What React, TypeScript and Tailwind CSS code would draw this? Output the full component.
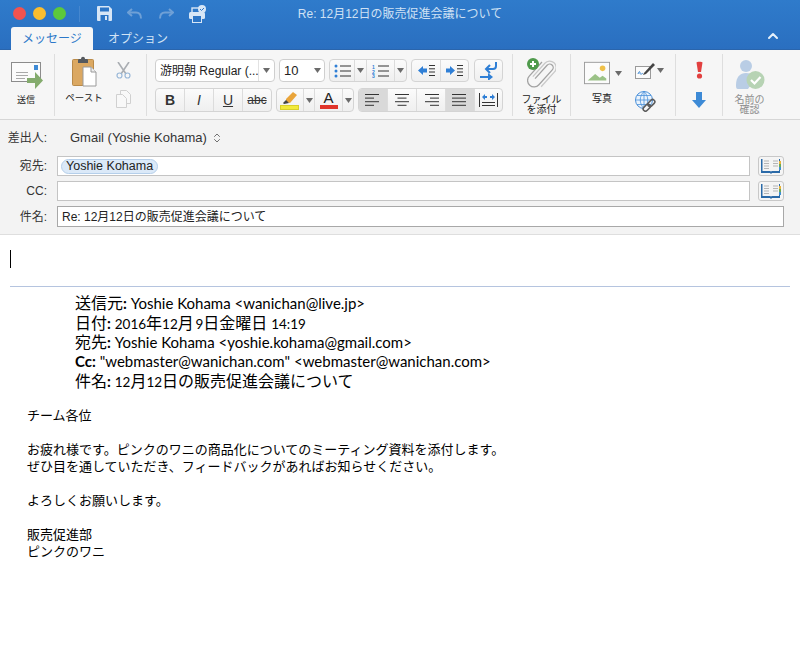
import type { ReactNode } from 'react'
import { ChevronUp, ChevronsUpDown } from 'lucide-react'

const jp = { fontFamily: '"Liberation Sans", "Noto Sans CJK JP", sans-serif' }

const Caret = ({ color = '#6b6b6b' }: { color?: string }) => (
	<svg width="7" height="5" viewBox="0 0 7 5" className="shrink-0">
		<path d="M0 0h7L3.5 5z" fill={color} />
	</svg>
)

const Seg = ({ children, className = '' }: { children: ReactNode; className?: string }) => (
	<div
		className={`flex shrink-0 rounded-[4px] border border-[#d4d4d4] bg-gradient-to-b from-[#fbfbfb] to-[#efefef] overflow-hidden ${className}`}
	>
		{children}
	</div>
)

const Cell = ({ children, w, active, last }: { children: ReactNode; w: string; active?: boolean; last?: boolean }) => (
	<div
		className={`flex items-center justify-center ${w} ${last ? '' : 'border-r border-[#dcdcdc]'} ${active ? 'bg-[#d9d9d9]' : ''}`}
	>
		{children}
	</div>
)

const AlignIcon = ({ widths, anchor }: { widths: number[]; anchor: 'l' | 'c' | 'r' }) => (
	<svg width="16" height="12" viewBox="0 0 16 12">
		{widths.map((w, i) => {
			const x = anchor === 'l' ? 0 : anchor === 'r' ? 16 - w : (16 - w) / 2
			return <rect key={i} x={x} y={i * 3.6} width={w} height="1" fill="#333" />
		})}
	</svg>
)

const BookIcon = () => (
	<svg width="20" height="18" viewBox="0 0 20 18">
		<path d="M0 2h9l1 1 1-1h8v14h-8l-1 1-1-1H0z" fill="#2b6aa8" />
		<path d="M1.5 1h7.5l1 1v12.5l-1-.5H1.5zM18 1h-7l-1 1v12.5l1-.5h7z" fill="#f4f4f4" />
		<path d="M3 4h5M3 6.5h5M3 9h5M3 11.5h5M12 4h5M12 6.5h5M12 9h5" stroke="#b5b5b5" strokeWidth="1" />
		<rect x="18" y="4" width="2" height="3" fill="#e8b23a" />
		<rect x="18" y="7" width="2" height="3" fill="#6aaa55" />
		<rect x="18" y="10" width="2" height="3" fill="#3f8fd0" />
	</svg>
)

const SendIcon = () => (
	<svg width="32" height="27" viewBox="0 0 32 27">
		<rect x="0.5" y="0.5" width="29" height="19" fill="#fbfbfb" stroke="#8c8c8c" />
		<rect x="23" y="3" width="4" height="5" fill="#3d8ad6" />
		<path d="M5 10.500h12M5 13.500h12M5 16.500h9" stroke="#a9a9a9" />
		<path d="M16 16h8v-6l8 8.500-8 8.500v-6h-8z" fill="#84ab6d" />
	</svg>
)

const PasteIcon = () => (
	<svg width="25" height="31" viewBox="0 0 25 31">
		<rect x="0.500" y="3.500" width="21" height="26" rx="1" fill="#dba862" stroke="#b98a49" />
		<path d="M6 4c0-1 1-1 2-1h1c0-3 4-3 4 0h1c1 0 2 0 2 1v3H6z" fill="#55595e" />
		<path d="M11 11h8l5 5v14H11z" fill="#fff" stroke="#9a9a9a" />
		<path d="M19 11v5h5" fill="#eee" stroke="#9a9a9a" />
	</svg>
)

const ScissorsIcon = () => (
	<svg width="15" height="17" viewBox="0 0 15 17" fill="none">
		<path d="M2 0l8 12M13 0L5 12" stroke="#a9adb2" strokeWidth="1.600" />
		<circle cx="3.500" cy="13.500" r="2.500" stroke="#9ab8d8" strokeWidth="1.200" />
		<circle cx="11.500" cy="13.500" r="2.500" stroke="#9ab8d8" strokeWidth="1.200" />
	</svg>
)

const CopyIcon = () => (
	<svg width="15" height="18" viewBox="0 0 15 18" fill="#f8f8f8" stroke="#d0d0d0">
		<path d="M4.500.5h6l4 4v9h-10z" />
		<path d="M.5 4.500h6l4 4v9h-10z" />
	</svg>
)

const SaveIcon = () => (
	<svg width="15" height="15" viewBox="0 0 15 15">
		<path d="M1 0h11l3 3v11a1 1 0 0 1-1 1H1a1 1 0 0 1-1-1V1a1 1 0 0 1 1-1z" fill="#d7e6f6" />
		<rect x="3" y="1.500" width="9" height="4" fill="#2c75c6" />
		<rect x="3.500" y="9" width="8" height="6" fill="#2c75c6" />
		<rect x="8" y="10" width="2" height="4" fill="#d7e6f6" />
	</svg>
)

const TurnIcon = ({ flip }: { flip?: boolean }) => (
	<svg width="15" height="12" viewBox="0 0 15 12" fill="none" style={flip ? { transform: 'scaleX(-1)' } : undefined}>
		<path d="M5 1L1 4.500 5 8" stroke="#6fa0d6" strokeWidth="2" />
		<path d="M2 4.500h7c4 0 5 2 5 6" stroke="#6fa0d6" strokeWidth="2" />
	</svg>
)

const PrintIcon = () => (
	<svg width="18" height="18" viewBox="0 0 18 18">
		<rect x="3" y="3" width="9" height="5" fill="none" stroke="#d7e6f6" strokeWidth="1.400" />
		<rect x="0" y="7" width="16" height="7" rx="1.500" fill="#d7e6f6" />
		<rect x="3.500" y="10.500" width="9" height="7" fill="#2c75c6" stroke="#d7e6f6" />
		<circle cx="13" cy="4" r="4" fill="#d7e6f6" />
		<path d="M11 4l1.500 1.500L15 3" stroke="#2c75c6" fill="none" />
	</svg>
)

const AttachIcon = () => (
	<svg width="29" height="33" viewBox="0 0 29 33" fill="none">
		<g transform="rotate(42 16 17)">
			<path d="M12.500 25V7a3.500 3.500 0 0 1 7 0v20a6.500 6.500 0 0 1-13 0V8" stroke="#a3a3a3" strokeWidth="1.300" />
			<path d="M9.500 25V7a6.500 6.500 0 0 1 13 0v20" stroke="#c9c9c9" strokeWidth="1.300" />
		</g>
		<circle cx="6" cy="6" r="6" fill="#4f9a4c" />
		<path d="M6 3v6M3 6h6" stroke="#fff" strokeWidth="2" />
	</svg>
)

const PictureIcon = () => (
	<svg width="28" height="24" viewBox="0 0 28 24">
		<rect x="0.500" y="0.500" width="27" height="23" fill="#fbfbfb" stroke="#9a9a9a" />
		<path d="M4 20l8-7 5 4 3-2 4 3v2z" fill="#9bc287" />
		<circle cx="20" cy="7" r="3" fill="#efc049" />
	</svg>
)

const SignIcon = () => (
	<svg width="21" height="17" viewBox="0 0 21 17" fill="none">
		<rect x="0.500" y="4.500" width="15" height="12" fill="#fbfbfb" stroke="#9a9a9a" />
		<path d="M3 12c1-3 2-3 2-1s2 1 3 0" stroke="#3d8ad6" />
		<path d="M9 11l9-10 2 2-9 9-3 1z" fill="#444" />
	</svg>
)

const LinkIcon = () => (
	<svg width="21" height="21" viewBox="0 0 21 21" fill="none">
		<circle cx="9" cy="9" r="8.500" fill="#eaf3fc" stroke="#4a90d9" />
		<path
			d="M.5 9h17M9 .5v17M2 4.500h14M2 13.500h14M9 .5c-5 5-5 12 0 17M9 .5c5 5 5 12 0 17"
			stroke="#4a90d9"
			strokeWidth="0.800"
		/>
		<g transform="rotate(-45 14 14)" stroke="#5c5c5c" strokeWidth="1.600">
			<rect x="6.500" y="12" width="8" height="4.500" rx="2.200" fill="#f6f6f6" />
			<rect x="13" y="12" width="8" height="4.500" rx="2.200" />
		</g>
	</svg>
)

const PeopleIcon = () => (
	<svg width="30" height="36" viewBox="0 0 30 36">
		<circle cx="11" cy="7" r="6" fill="#b9cde5" />
		<path d="M1 26c0-8 4-12 10-12s8 3 9 6l-7 10H3c-2 0-2-2-2-4z" fill="#b9cde5" />
		<circle cx="20.500" cy="21" r="9" fill="#b7d3b4" />
		<path d="M16 21l3.500 3.500L25.500 18" stroke="#fff" strokeWidth="2.200" fill="none" />
	</svg>
)

const BulletIcon = ({ numbered }: { numbered?: boolean }) => (
	<svg width="17" height="14" viewBox="0 0 17 14">
		{numbered ? (
			<>
				<text x="0" y="4.500" fontSize="5" fill="#2f7fd6" fontWeight="700">1</text>
				<text x="0" y="9.500" fontSize="5" fill="#2f7fd6" fontWeight="700">2</text>
				<text x="0" y="14" fontSize="5" fill="#2f7fd6" fontWeight="700">3</text>
			</>
		) : (
			<>
				<circle cx="2" cy="2" r="1.500" fill="#2f7fd6" />
				<circle cx="2" cy="7" r="1.500" fill="#2f7fd6" />
				<circle cx="2" cy="12" r="1.500" fill="#2f7fd6" />
			</>
		)}
		<path d="M6 2h11M6 7h11M6 12h11" stroke="#333" />
	</svg>
)

const IndentIcon = ({ right }: { right?: boolean }) => (
	<svg width="17" height="11" viewBox="0 0 17 11">
		<path d="M11 .5h6M11 3.800h6M11 7h6M11 10.500h6" stroke="#333" />
		{right ? (
			<path d="M0 3.500h4V1l5 4.500L4 10V7.500H0z" fill="#2f7fd6" />
		) : (
			<path d="M9 3.500H5V1L0 5.500 5 10V7.500h4z" fill="#2f7fd6" />
		)}
	</svg>
)

const WrapIcon = () => (
	<svg width="18" height="18" viewBox="0 0 18 18" fill="none" stroke="#2f7fd6" strokeWidth="2">
		<path d="M16 0v4c0 2-1 3-3 3H7" />
		<path d="M10 3 6 7l4 4" />
		<path d="M0 15h9" />
		<path d="M8 11v8l5-4z" fill="#2f7fd6" stroke="none" />
	</svg>
)

const Field = ({
	label,
	children,
	book,
	subject,
}: {
	label: string
	children?: ReactNode
	book?: boolean
	subject?: boolean
}) => (
	<div className={`flex items-center mb-[5px] ${subject ? 'h-[21px]' : 'h-5'}`}>
		<div className="w-[47px] text-right text-[12px] text-[#333]">{label}:</div>
		<div
			className={`ml-[10px] flex-1 h-full bg-white border flex items-center px-1 text-[12px] text-[#222] ${subject ? 'border-[#a8a8a8]' : 'border-[#c4c4c4]'}`}
		>
			{children}
		</div>
		{book && (
			<div className="ml-2 w-[26px] h-full rounded-[3px] border border-[#c8c8c8] bg-[#f5f5f5] flex items-center justify-center">
				<BookIcon />
			</div>
		)}
	</div>
)

const Ribbon = () => (
	<div className="h-[70px] bg-[#f6f6f6] border-b border-[#d6d6d6] flex pt-1 text-[#222]" style={jp}>
		{/* send */}
		<div className="w-[55px] h-[62px] border-r border-[#dedede] flex flex-col items-center pt-2 shrink-0">
			<div className="h-[29px]">
				<SendIcon />
			</div>
			<div className="text-[9px] leading-3 mt-[3px] -ml-[2px]">送信</div>
		</div>
		{/* clipboard */}
		<div className="w-[92px] h-[62px] border-r border-[#dedede] flex shrink-0 pl-[4px]">
			<div className="w-[50px] flex flex-col items-center pt-[2px]">
				<PasteIcon />
				<div className="text-[9.500px] leading-3 mt-[5px] whitespace-nowrap">ペースト</div>
			</div>
			<div className="flex flex-col items-center pl-[7px] pt-2 gap-[11px]">
				<ScissorsIcon />
				<CopyIcon />
			</div>
		</div>
		{/* font */}
		<div className="w-[366px] h-[62px] border-r border-[#dedede] pl-2 flex flex-col gap-[6px] pt-[5px] shrink-0">
			<div className="flex gap-1 h-[23px]">
				<div className="w-[120px] rounded-[4px] border border-[#cfcfcf] bg-white flex items-center text-[12px]">
					<div className="flex-1 pl-1 whitespace-nowrap overflow-hidden">游明朝 Regular (...</div>
					<div className="w-[16px] h-full border-l border-[#e2e2e2] flex items-center justify-center">
						<Caret />
					</div>
				</div>
				<div className="w-[46px] rounded-[4px] border border-[#cfcfcf] bg-white flex items-center text-[13px]">
					<div className="flex-1 pl-1">10</div>
					<div className="w-[14px] h-full flex items-center justify-center">
						<Caret />
					</div>
				</div>
				<Seg className="w-[78px]">
					<Cell w="w-[25px]">
						<BulletIcon />
					</Cell>
					<Cell w="w-[12px]">
						<Caret />
					</Cell>
					<Cell w="w-[28px]">
						<BulletIcon numbered />
					</Cell>
					<Cell w="flex-1" last>
						<Caret />
					</Cell>
				</Seg>
				<Seg className="w-[58px]">
					<Cell w="w-[29px]">
						<IndentIcon />
					</Cell>
					<Cell w="flex-1" last>
						<IndentIcon right />
					</Cell>
				</Seg>
				<Seg className="w-[29px] ml-[1px]">
					<Cell w="flex-1" last>
						<WrapIcon />
					</Cell>
				</Seg>
			</div>
			<div className="flex gap-1 h-6">
				<Seg className="w-[117px] text-[14px] text-[#333]">
					<Cell w="w-[29px]">
						<span className="font-bold">B</span>
					</Cell>
					<Cell w="w-[29px]">
						<span className="italic">I</span>
					</Cell>
					<Cell w="w-[29px]">
						<span className="underline">U</span>
					</Cell>
					<Cell w="flex-1" last>
						<span className="line-through text-[12px]">abc</span>
					</Cell>
				</Seg>
				<Seg className="w-[78px]">
					<Cell w="w-[27px]">
						<svg width="20" height="20" viewBox="0 0 20 20">
							<path d="M6 9l7-7 4 3-7 8-4-1z" fill="#e9a43a" />
							<path d="M3 13l3-3 3 3-5 1z" fill="#444" />
							<rect x="0.500" y="15.500" width="18" height="4" fill="#f2ea3a" stroke="#d8ce2c" />
						</svg>
					</Cell>
					<Cell w="w-[11px]">
						<Caret />
					</Cell>
					<Cell w="w-[28px]">
						<div className="flex flex-col items-center leading-none text-[15px]">
							<span className="h-[13px] leading-[13px]">A</span>
							<span className="w-[18px] h-1 bg-[#e0352b] mt-[1px]" />
						</div>
					</Cell>
					<Cell w="flex-1" last>
						<Caret />
					</Cell>
				</Seg>
				<Seg className="w-[145px]">
					<Cell w="w-[29px]" active>
						<AlignIcon widths={[14, 9, 14, 9]} anchor="l" />
					</Cell>
					<Cell w="w-[29px]">
						<AlignIcon widths={[14, 9, 14, 9]} anchor="c" />
					</Cell>
					<Cell w="w-[29px]">
						<AlignIcon widths={[14, 9, 14, 9]} anchor="r" />
					</Cell>
					<Cell w="w-[29px]" active>
						<AlignIcon widths={[14, 14, 14, 14]} anchor="l" />
					</Cell>
					<Cell w="flex-1" last>
						<svg width="19" height="14" viewBox="0 0 19 14">
							<path d="M.5 0v14M18.500 0v14" stroke="#333" />
							<path d="M3 4l3-3v2h2v2H6v2zM16 4l-3-3v2h-2v2h2v2z" fill="#2f7fd6" />
							<path d="M3 9.500h13M3 12.500h13" stroke="#333" />
						</svg>
					</Cell>
				</Seg>
			</div>
		</div>
		{/* attach */}
		<div className="w-[58px] h-[62px] border-r border-[#dedede] flex flex-col items-center pt-[4px] shrink-0">
			<AttachIcon />
			<div className="text-[10px] leading-[10px] text-center mt-[4px] whitespace-nowrap">
				ファイル
				<br />
				を添付
			</div>
		</div>
		{/* picture and signature */}
		<div className="w-[105px] h-[62px] border-r border-[#dedede] flex pl-[13px] shrink-0">
			<div className="w-[38px] flex flex-col pt-[7px]">
				<div className="flex items-center gap-[5px]">
					<PictureIcon />
					<Caret />
				</div>
				<div className="text-[10px] leading-3 mt-2 pl-2">写真</div>
			</div>
			<div className="pl-[13px] pt-2 flex flex-col gap-3">
				<div className="flex items-center gap-[1px]">
					<SignIcon />
					<Caret />
				</div>
				<LinkIcon />
			</div>
		</div>
		{/* flags */}
		<div className="w-[47px] h-[62px] border-r border-[#dedede] flex flex-col items-center pt-[7px] gap-[13px] shrink-0">
			<svg width="7" height="18" viewBox="0 0 7 18">
				<path d="M.5 1.500C.5.500 6.500.500 6.500 1.500L5 11H2z" fill="#e2403f" />
				<circle cx="3.500" cy="15" r="2.600" fill="#e2403f" />
			</svg>
			<svg width="14" height="16" viewBox="0 0 14 16">
				<path d="M4 0h6v8h4l-7 8-7-8h4z" fill="#3d8ad6" />
			</svg>
		</div>
		{/* check names */}
		<div className="flex-1 h-[62px] flex flex-col items-center pr-[24px] pt-[5px]">
			<PeopleIcon />
			<div className="text-[10px] leading-[10px] text-center text-[#8d8d8d]">
				名前の
				<br />
				確認
			</div>
		</div>
	</div>
)

// Japanese in the quoted header runs at 16px, the latin at about 15px
const J = ({ children }: { children: ReactNode }) => <span className="text-[16px]">{children}</span>
const N = ({ children }: { children: ReactNode }) => <span className="text-[13.500px]">{children}</span>

export default function App() {
	return (
		<div className="w-full h-screen overflow-hidden bg-white flex flex-col" style={jp}>
			{/* title bar */}
			<div className="h-[50px] shrink-0 bg-gradient-to-b from-[#2f7bcb] to-[#2a6fc0] border-b border-[#2a65ac] relative">
				<div className="h-[27px] flex items-center pl-[13px]">
					<div className="flex gap-[7px]">
						<span className="w-[13px] h-[13px] rounded-full bg-[#f2534f]" />
						<span className="w-[13px] h-[13px] rounded-full bg-[#fbbd2e]" />
						<span className="w-[13px] h-[13px] rounded-full bg-[#5cc83c]" />
					</div>
					<div className="w-px h-[16px] bg-[#4587cf] ml-[13px]" />
					<div className="ml-[17px] flex items-center gap-[15px]">
						<SaveIcon />
						<TurnIcon />
						<div className="ml-[2px]">
							<TurnIcon flip />
						</div>
						<PrintIcon />
					</div>
					<div className="absolute left-0 right-0 top-[6px] text-center text-[12px] leading-4 text-[#cfe1f4] pointer-events-none">
						Re: 12月12日の販売促進会議について
					</div>
				</div>
				<div className="flex h-[23px] pl-[11px] text-[12px] items-end">
					<div className="w-[82px] h-[23px] bg-[#f6f6f6] rounded-t-[3px] text-[#2c78c9] flex items-center justify-center">
						メッセージ
					</div>
					<div className="ml-[15px] h-[23px] flex items-center text-[#d2e3f5]">オプション</div>
				</div>
				<ChevronUp className="absolute left-[765px] top-[28px] text-[#e6f0fa]" size={16} strokeWidth={3} />
			</div>
			<Ribbon />
			{/* address fields */}
			<div className="h-[115px] shrink-0 bg-[#f3f3f3] border-b border-[#dedede] pr-4">
				<div className="flex items-center h-[36px] pb-[1px] text-[12px] text-[#333]">
					<div className="w-[47px] text-right">差出人:</div>
					<div className="ml-[23px] flex items-center gap-[4px] text-[13px]">
						Gmail (Yoshie Kohama)
						<ChevronsUpDown size={12} strokeWidth={1.500} className="text-[#444]" />
					</div>
				</div>
				<Field label="宛先" book>
					<span className="rounded-full bg-[#dbe9f8] border border-[#b5cfea] px-1 -ml-[1px] h-[15px] leading-[13px] text-[12.500px] text-[#222]">
						Yoshie Kohama
					</span>
				</Field>
				<Field label="CC" book />
				<Field label="件名" subject>
					Re: 12月12日の販売促進会議について
				</Field>
			</div>
			{/* message body */}
			<div className="flex-1 px-[10px] pt-[15px] text-black">
				<div className="w-px h-[18px] bg-black" />
				<div className="h-px bg-[#b5c4df] mt-[18px]" />
				<div
					className="pl-[65px] pt-[6px] text-[15px] leading-[19.500px] whitespace-nowrap"
					style={{ fontFamily: 'Lato, "Noto Sans CJK JP", sans-serif' }}
				>
					<div className="h-[19.500px]">
						<J>送信元</J>
						<b>:</b> Yoshie Kohama &lt;wanichan@live.jp&gt;
					</div>
					<div className="h-[19.500px]">
						<J>日付</J>
						<b>:</b> <N>2016</N>
						<J>年</J>
						<N>12</N>
						<J>月</J>
						<N>&#8201;9</N>
						<J>日金曜日</J> <N>14:19</N>
					</div>
					<div className="h-[19.500px]">
						<J>宛先</J>
						<b>:</b> Yoshie Kohama &lt;yoshie.kohama@gmail.com&gt;
					</div>
					<div className="h-[19.500px]">
						<b>Cc:</b> "webmaster@wanichan.com" &lt;webmaster@wanichan.com&gt;
					</div>
					<div className="h-[19.500px]">
						<J>件名</J>
						<b>:</b> <N>12</N>
						<J>月</J>
						<N>12</N>
						<J>日の販売促進会議について</J>
					</div>
				</div>
				<div
					className="pl-[17px] mt-[15px] text-[13px] leading-[17px]"
					style={{ fontFamily: '"Noto Sans CJK JP", sans-serif' }}
				>
					<div>チーム各位</div>
					<div className="h-[17px]" />
					<div>お疲れ様です。ピンクのワニの商品化についてのミーティング資料を添付します。</div>
					<div>ぜひ目を通していただき、フィードバックがあればお知らせください。</div>
					<div className="h-[17px]" />
					<div>よろしくお願いします。</div>
					<div className="h-[17px]" />
					<div>販売促進部</div>
					<div>ピンクのワニ</div>
				</div>
			</div>
		</div>
	)
}
